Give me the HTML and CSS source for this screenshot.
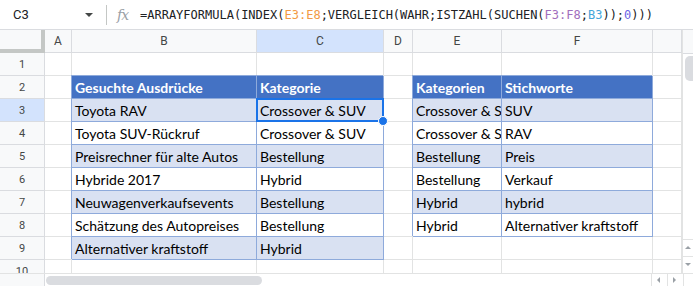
FILE: index.html
```html
<!DOCTYPE html>
<html>
<head>
<meta charset="UTF-8">
<title>Tabelle</title>
<link rel="stylesheet" href="styles.css">
</head>
<body>
<div class="bar">
    <span class="ref">C3</span>
    <span class="caret"></span>
    <span class="sep"></span>
    <span class="fx">fx</span>
    <span class="formula">=ARRAYFORMULA(INDEX(<span class="r1">E3:E8</span>;VERGLEICH(WAHR;ISTZAHL(SUCHEN(<span class="r2">F3:F8</span>;<span class="r3">B3</span>));<span class="num">0</span>)))</span>
</div>
<div class="main">
    <div class="grid">
        <!-- Kopfzeile -->
        <div class="corner"></div>
        <div class="ch">A</div>
        <div class="ch">B</div>
        <div class="ch hl">C</div>
        <div class="ch">D</div>
        <div class="ch">E</div>
        <div class="ch">F</div>
        <div class="ch"></div>
        <!-- 1 -->
        <div class="rh">1</div>
        <div class="c"></div><div class="c"></div><div class="c"></div><div class="c"></div><div class="c"></div><div class="c"></div><div class="c"></div>
        <!-- 2 -->
        <div class="rh">2</div>
        <div class="c"></div>
        <div class="c tb th">Gesuchte Ausdrücke</div>
        <div class="c tb th">Kategorie</div>
        <div class="c"></div>
        <div class="c tb th">Kategorien</div>
        <div class="c tb th">Stichworte</div>
        <div class="c"></div>
        <!-- 3 -->
        <div class="rh hl">3</div>
        <div class="c"></div>
        <div class="c tb alt">Toyota RAV</div>
        <div class="c tb alt sel">Crossover &amp; SUV</div>
        <div class="c"></div>
        <div class="c tb alt">Crossover &amp; SUV</div>
        <div class="c tb alt">SUV</div>
        <div class="c"></div>
        <!-- 4 -->
        <div class="rh">4</div>
        <div class="c"></div>
        <div class="c tb">Toyota SUV-Rückruf</div>
        <div class="c tb">Crossover &amp; SUV</div>
        <div class="c"></div>
        <div class="c tb">Crossover &amp; SUV</div>
        <div class="c tb">RAV</div>
        <div class="c"></div>
        <!-- 5 -->
        <div class="rh">5</div>
        <div class="c"></div>
        <div class="c tb alt">Preisrechner für alte Autos</div>
        <div class="c tb alt">Bestellung</div>
        <div class="c"></div>
        <div class="c tb alt">Bestellung</div>
        <div class="c tb alt">Preis</div>
        <div class="c"></div>
        <!-- 6 -->
        <div class="rh">6</div>
        <div class="c"></div>
        <div class="c tb">Hybride 2017</div>
        <div class="c tb">Hybrid</div>
        <div class="c"></div>
        <div class="c tb">Bestellung</div>
        <div class="c tb">Verkauf</div>
        <div class="c"></div>
        <!-- 7 -->
        <div class="rh">7</div>
        <div class="c"></div>
        <div class="c tb alt">Neuwagenverkaufsevents</div>
        <div class="c tb alt">Bestellung</div>
        <div class="c"></div>
        <div class="c tb alt">Hybrid</div>
        <div class="c tb alt">hybrid</div>
        <div class="c"></div>
        <!-- 8 -->
        <div class="rh">8</div>
        <div class="c"></div>
        <div class="c tb">Schätzung des Autopreises</div>
        <div class="c tb">Bestellung</div>
        <div class="c"></div>
        <div class="c tb">Hybrid</div>
        <div class="c tb">Alternativer kraftstoff</div>
        <div class="c"></div>
        <!-- 9 -->
        <div class="rh">9</div>
        <div class="c"></div>
        <div class="c tb alt">Alternativer kraftstoff</div>
        <div class="c tb alt">Hybrid</div>
        <div class="c"></div><div class="c"></div><div class="c"></div><div class="c"></div>
        <!-- 10 -->
        <div class="rh">10</div>
        <div class="c"></div><div class="c"></div><div class="c"></div><div class="c"></div><div class="c"></div><div class="c"></div><div class="c"></div>
    </div>
    <div class="vscroll">
        <div class="vtop"></div>
        <div class="vtrack"><div class="vthumb"></div></div>
        <div class="arrow up"></div>
        <div class="arrow down"></div>
    </div>
</div>
<div class="hscroll">
    <div class="hleft"></div>
    <div class="htrack"><div class="hthumb"></div></div>
    <div class="harrow left"></div>
    <div class="harrow right"></div>
    <div class="hcorner"></div>
</div>
</body>
</html>
```

FILE: styles.css
```css
body{
    margin: 0;
    background: #fff;
    font-family: Roboto, "Liberation Sans", sans-serif;
    color: #202124;
    overflow: hidden;
}
.bar{
    height: 30px;
    box-sizing: border-box;
    border-bottom: 1px solid #dadce0;
    display: flex;
    align-items: center;
}
.ref{
    width: 72px;
    padding-left: 13px;
    font-size: 13px;
    color: #202124;
}
.caret{
    width: 0;
    height: 0;
    border-left: 4px solid transparent;
    border-right: 4px solid transparent;
    border-top: 4px solid #444746;
}
.sep{
    width: 1px;
    height: 20px;
    background: #c4c7c5;
    margin-left: 13px;
}
.fx{
    margin-left: 10px;
    width: 23px;
    font-family: "DejaVu Serif", serif;
    font-style: italic;
    font-size: 14px;
    color: #9aa0a6;
    letter-spacing: -1px;
}
.formula{
    font-family: "DejaVu Sans Mono", monospace;
    font-size: 12px;
    color: #202124;
    white-space: nowrap;
}
.r1{ color: #f29a45; }
.r2{ color: #a16ebd; }
.r3{ color: #45a5d9; }
.num{ color: #6b63e6; }

.main{
    display: flex;
    height: 243px;
}
.grid{
    width: 682px;
    height: 243px;
    overflow: hidden;
    display: grid;
    grid-template-columns: 45px 27px 185px 127px 29px 89px 151px 29px;
    grid-auto-rows: 23px;
}
.grid > div{
    box-sizing: border-box;
    border-right: 1px solid #e2e3e3;
    border-bottom: 1px solid #e2e3e3;
    white-space: nowrap;
    overflow: hidden;
}
.corner{
    background: #f8f9fa;
    border-right: 4px solid #c4c7c5 !important;
    border-bottom: 4px solid #c4c7c5 !important;
}
.ch, .rh{
    background: #f8f9fa;
    font-size: 11px;
    color: #444746;
    display: flex;
    align-items: center;
    justify-content: center;
}
.ch{
    font-size: 12px;
    border-color: #dadce0 !important;
}
.grid > .rh{
    border-color: #dadce0;
}
.hl{
    background: #d3e3fd;
}
.c{
    font-family: Lato, "Noto Sans", sans-serif;
    font-size: 14px;
    color: #000;
    padding: 3px 0 0 3px;
    line-height: 18px;
}
.grid > .tb{
    border-color: #8eaadb;
    box-shadow: -1px -1px 0 #8eaadb;
}
.th{
    background: #4472c4;
    color: #fff;
    font-weight: bold;
}
.alt{
    background: #d9e1f2;
}
.grid > .sel{
    position: relative;
    overflow: visible;
}
.sel::after{
    content: "";
    position: absolute;
    left: -1px;
    top: -1px;
    right: -1px;
    bottom: -1px;
    border: 2px solid #1a73e8;
}
.sel::before{
    content: "";
    position: absolute;
    right: -5px;
    bottom: -5px;
    width: 8px;
    height: 8px;
    border-radius: 50%;
    background: #1a73e8;
    border: 1px solid #fff;
    z-index: 2;
}

.vscroll{
    width: 11px;
    display: flex;
    flex-direction: column;
    border-left: 1px solid #e2e3e3;
    box-sizing: border-box;
}
.vtop{
    height: 23px;
    background: #f8f9fa;
    border-bottom: 1px solid #dadce0;
}
.vtrack{
    flex: 1;
    padding-top: 2px;
}
.vthumb{
    margin-left: 2px;
    height: 25px;
    background: #dadce0;
    border-radius: 5px 0 0 5px;
}
.arrow{
    height: 16px;
    border-top: 1px solid #e2e3e3;
    position: relative;
}
.arrow::after{
    content: "";
    position: absolute;
    left: 2px;
    top: 6px;
    border-left: 3px solid transparent;
    border-right: 3px solid transparent;
}
.up::after{ border-bottom: 3px solid #9aa0a6; }
.down::after{ border-top: 3px solid #9aa0a6; }

.hscroll{
    height: 13px;
    display: flex;
    border-top: 1px solid #e2e3e3;
    box-sizing: border-box;
}
.hleft{
    width: 45px;
    background: #f8f9fa;
    border-right: 1px solid #dadce0;
    box-sizing: border-box;
}
.htrack{
    width: 606px;
    padding: 2px 0 0 1px;
    box-sizing: border-box;
}
.hthumb{
    width: 216px;
    height: 9px;
    border-radius: 5px;
    background: #dadce0;
}
.harrow{
    width: 16px;
    border-left: 1px solid #e2e3e3;
    box-sizing: border-box;
    position: relative;
}
.harrow::after{
    content: "";
    position: absolute;
    left: 5px;
    top: 3px;
    border-top: 3px solid transparent;
    border-bottom: 3px solid transparent;
}
.left::after{ border-right: 3px solid #9aa0a6; }
.right::after{ border-left: 3px solid #9aa0a6; }
.hcorner{
    flex: 1;
    border-left: 1px solid #e2e3e3;
}
```
